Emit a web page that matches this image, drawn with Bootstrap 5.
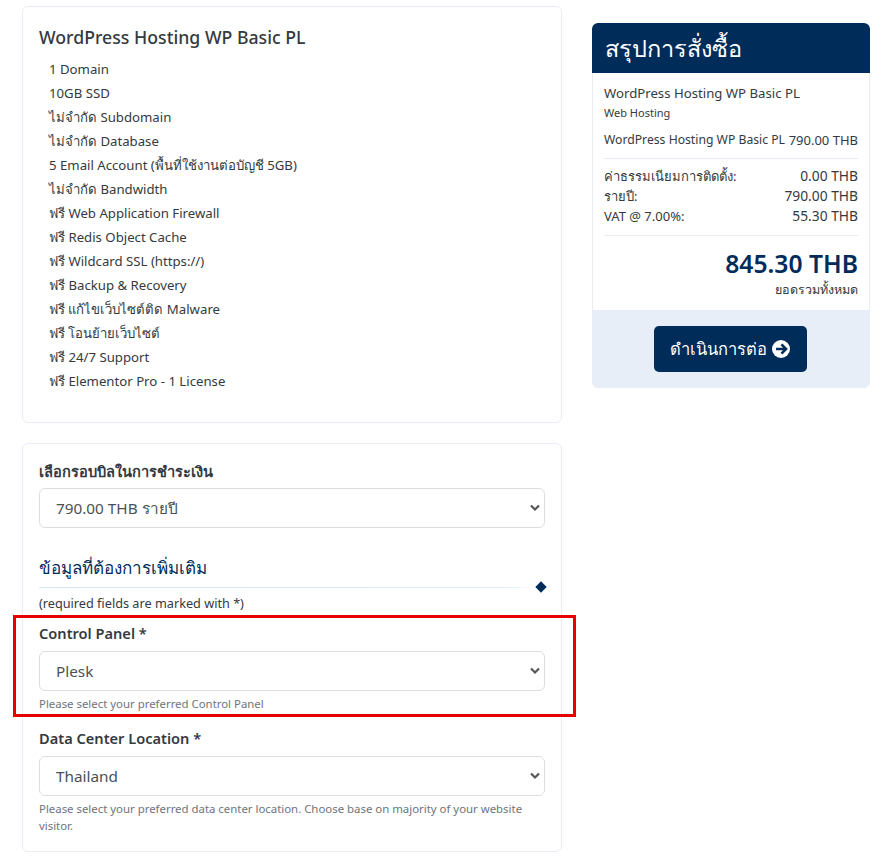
<!DOCTYPE html>
<html lang="th">
<head>
<meta charset="utf-8">
<title>Order</title>
<link href="https://cdn.jsdelivr.net/npm/bootstrap@5.3.0/dist/css/bootstrap.min.css" rel="stylesheet">
<style>
body{font-family:"Noto Sans","Liberation Sans",sans-serif;font-size:13px;color:#343a40;background:#fff;overflow:hidden;}
.shell{padding:6px 19px 0 22px;display:flex;gap:30px;align-items:flex-start;}
.leftcol{width:540px;flex:none;}
.rightcol{width:278px;flex:none;margin-top:17px;}
.panel{border:1px solid #e8edf4;border-radius:6px;background:#fff;}
.panel-a{height:417px;padding:17px 16px 0 16px;margin-bottom:20px;}
.panel-b{height:409px;padding:17px 16px 0 16px;}
.prod-title{font-size:17.7px;font-weight:500;line-height:26px;margin:0 0 7px;color:#343a40;}
.feat{list-style:none;margin:0;padding:0 0 0 10px;}
.feat li{line-height:24px;font-size:13.2px;}
.flabel{font-size:14.6px;font-weight:600;line-height:20px;margin:0 0 8px;display:block;}
.flabel-first{margin-bottom:7px;}
.sel{height:40px;border:1px solid #ddd;border-radius:6px;font-size:15.3px;padding:0 36px 0 16px;color:#495057;background-image:url("data:image/svg+xml,%3Csvg xmlns='http://www.w3.org/2000/svg' viewBox='0 0 10 8'%3E%3Cpath d='M1 1.5 5 5.5 9 1.5' fill='none' stroke='%23555' stroke-width='2.2'/%3E%3C/svg%3E");background-size:10px 8px;background-position:right 4px center;box-shadow:none;}
.sect-h{font-size:17px;font-weight:400;color:#002c5a;line-height:26px;margin:27px 0 6px;}
.rule{position:relative;height:1px;background:linear-gradient(90deg,#d4e6f7,#dcedfb 92%,#fff 98%);}
.rule i{position:absolute;right:0;top:-4px;width:8px;height:8px;background:#002c5a;transform:rotate(45deg);}
.req{font-size:12.7px;line-height:18px;margin:6px 0 11px;}
.fgroup{position:relative;margin-bottom:16px;}
.redbox{position:absolute;left:-26px;right:-31px;top:-8px;height:102px;border:3px solid #e60000;pointer-events:none;}
.help{font-size:11.4px;line-height:17px;color:#6c757d;margin-top:4px;}
.sum-head{background:#002c5a;color:#fff;font-size:23.5px;font-weight:500;line-height:50px;padding:0 13px;border-radius:6px 6px 0 0;}
.sum-body{border:solid #e8edf4;border-width:0 1px;padding:11px 11px 11px 11px;font-size:13px;}
.sum-name{font-size:13.2px;line-height:19px;}
.sum-cat{font-size:11px;line-height:19px;}
.sum-line{line-height:18px;margin:9px 0 9px;white-space:nowrap;font-size:12.2px;}
.sum-line b{font-weight:400;font-size:13px;}
.sum-sep{border-top:1px solid #e8edf4;}
.sum-rows{padding:7px 0 9px;line-height:20px;font-size:13px;}
.sum-rows b{font-weight:400;font-size:13.8px;}
.sum-total{text-align:right;color:#002c5a;font-size:24.7px;font-weight:600;line-height:30px;margin-top:13px;}
.sum-cap{text-align:right;font-size:12.5px;line-height:18px;margin-top:2px;}
.sum-foot{background:#e8eef7;border-radius:0 0 6px 6px;height:78px;display:flex;align-items:center;justify-content:center;padding-right:2px;}
.go{background:#002c5a;color:#fff;border:0;border-radius:5px;height:46px;width:153px;font-size:16.5px;font-weight:500;padding:0;}
.go:hover{background:#002c5a;color:#fff;}
.go svg{width:18px;height:18px;vertical-align:-3px;}
</style>
</head>
<body>
<div class="shell">
  <div class="leftcol">
    <div class="panel panel-a">
      <h3 class="prod-title">WordPress Hosting WP Basic PL</h3>
      <ul class="feat">
        <li>1 Domain</li>
        <li>10GB SSD</li>
        <li>ไม่จำกัด Subdomain</li>
        <li>ไม่จำกัด Database</li>
        <li>5 Email Account (พื้นที่ใช้งานต่อบัญชี 5GB)</li>
        <li>ไม่จำกัด Bandwidth</li>
        <li>ฟรี Web Application Firewall</li>
        <li>ฟรี Redis Object Cache</li>
        <li>ฟรี Wildcard SSL (https://)</li>
        <li>ฟรี Backup &amp; Recovery</li>
        <li>ฟรี แก้ไขเว็บไซต์ติด Malware</li>
        <li>ฟรี โอนย้ายเว็บไซต์</li>
        <li>ฟรี 24/7 Support</li>
        <li>ฟรี Elementor Pro - 1 License</li>
      </ul>
    </div>
    <div class="panel panel-b">
      <label class="flabel flabel-first" for="s1">เลือกรอบบิลในการชำระเงิน</label>
      <select id="s1" class="form-select sel"><option>790.00 THB รายปี</option></select>
      <h4 class="sect-h">ข้อมูลที่ต้องการเพิ่มเติม</h4>
      <div class="rule"><i></i></div>
      <p class="req">(required fields are marked with *)</p>
      <div class="fgroup">
        <div class="redbox"></div>
        <label class="flabel" for="s2">Control Panel *</label>
        <select id="s2" class="form-select sel"><option>Plesk</option></select>
        <div class="help">Please select your preferred Control Panel</div>
      </div>
      <div class="fgroup mb-0">
        <label class="flabel" for="s3">Data Center Location *</label>
        <select id="s3" class="form-select sel"><option>Thailand</option></select>
        <div class="help">Please select your preferred data center location. Choose base on majority of your website visitor.</div>
      </div>
    </div>
  </div>
  <div class="rightcol">
    <div class="sum-head">สรุปการสั่งซื้อ</div>
    <div class="sum-body">
      <div class="sum-name">WordPress Hosting WP Basic PL</div>
      <div class="sum-cat">Web Hosting</div>
      <div class="sum-line d-flex justify-content-between"><span>WordPress Hosting WP Basic PL</span><b>790.00 THB</b></div>
      <div class="sum-sep"></div>
      <div class="sum-rows">
        <div class="d-flex justify-content-between"><span>ค่าธรรมเนียมการติดตั้ง:</span><b>0.00 THB</b></div>
        <div class="d-flex justify-content-between"><span>รายปี:</span><b>790.00 THB</b></div>
        <div class="d-flex justify-content-between"><span>VAT @ 7.00%:</span><b>55.30 THB</b></div>
      </div>
      <div class="sum-sep"></div>
      <div class="sum-total">845.30 THB</div>
      <div class="sum-cap">ยอดรวมทั้งหมด</div>
    </div>
    <div class="sum-foot">
      <button type="button" class="btn go">ดำเนินการต่อ <svg viewBox="0 0 20 20"><circle cx="10" cy="10" r="10" fill="#fff"/><path d="M10.5 4.8 15.7 10l-5.2 5.2M15 10H4.5" fill="none" stroke="#002c5a" stroke-width="2.8"/></svg></button>
    </div>
  </div>
</div>
<script src="https://cdn.jsdelivr.net/npm/bootstrap@5.3.0/dist/js/bootstrap.bundle.min.js"></script>
</body>
</html>
